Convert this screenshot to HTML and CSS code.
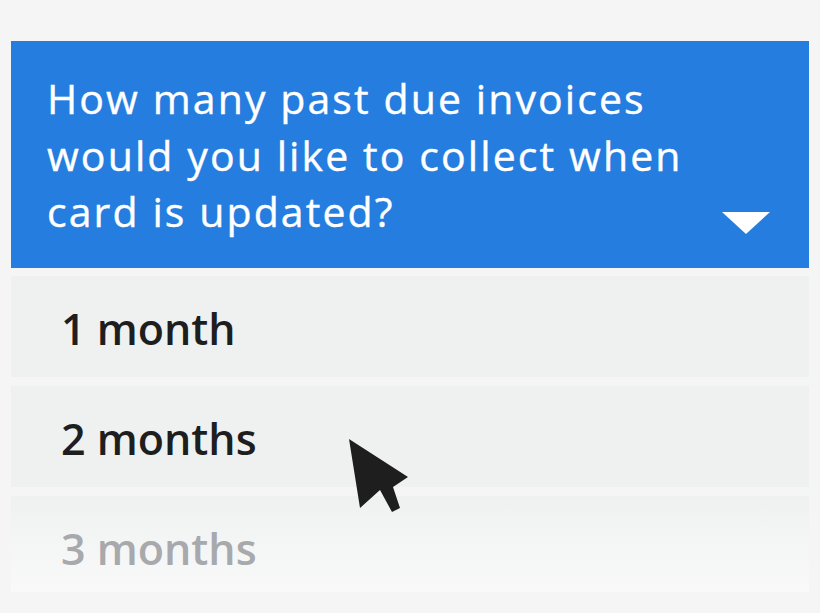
FILE: index.html
```html
<!DOCTYPE html>
<html>
<head>
<meta charset="utf-8">
<link rel="stylesheet" href="styles.css">
</head>
<body>
<div class="page">
  <div class="dropdown">
    <div class="header">
      <div class="question">How many past due invoices<br>would you like to collect when<br>card is updated?</div>
      <svg class="caret" width="48" height="22" viewBox="0 0 48 22"><polygon points="0,0 48,0 24,22" fill="#fff"/></svg>
    </div>
    <div class="option">1 month</div>
    <div class="option">2 months</div>
    <div class="option faded">3 months</div>
  </div>
  <svg class="cursor" width="62" height="76" viewBox="0 0 62 76">
    <polygon points="1,1 60,39 45,49 52,70 44,74 32,52 12,70" fill="#1e1e1e"/>
  </svg>
</div>
</body>
</html>
```
FILE: styles.css
```css
html, body { margin: 0; padding: 0; }
body {
  background: #f5f5f5;
  width: 820px;
  height: 613px;
  overflow: hidden;
  font-family: "Open Sans", "Liberation Sans", sans-serif;
}
.page {
  position: relative;
  padding: 41px 11px 0 11px;
}
.dropdown {
  display: flex;
  flex-direction: column;
  gap: 9px;
}
.header {
  background: #247ddf;
  height: 227px;
  box-sizing: border-box;
  padding: 29px 39px 34px 36px;
  display: flex;
  justify-content: space-between;
  align-items: flex-end;
  margin-bottom: -1px;
}
.question {
  color: #fff;
  font-size: 41px;
  font-weight: 500;
  letter-spacing: 2.1px;
  line-height: 56.5px;
  align-self: flex-start;
  white-space: nowrap;
  -webkit-text-stroke: 0.4px #fff;
}
.caret { display: block; }
.option {
  background: #eff1f1;
  height: 101px;
  box-sizing: border-box;
  padding-left: 50px;
  padding-top: 4px;
  display: flex;
  align-items: center;
  font-size: 43px;
  font-weight: 600;
  color: #1e1e1e;
}
.faded {
  background: linear-gradient(#eff1f1, #f9f9f9);
  color: #a7a9ac;
  height: 96px;
  padding-top: 8px;
}
.cursor {
  position: absolute;
  left: 348px;
  top: 438px;
}
```
